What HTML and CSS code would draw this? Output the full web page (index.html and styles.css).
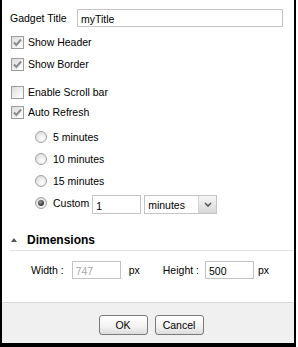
FILE: index.html
```html
<!DOCTYPE html>
<html lang="en">
<head>
  <meta charset="UTF-8">
  <title>Gadget Settings</title>
  <link rel="stylesheet" href="styles.css">
</head>
<body>
  <div class="dialog">
    <div class="content">
      <div class="title-row">
        <span class="title-label">Gadget Title</span>
        <input class="title-input" type="text" value="myTitle">
      </div>

      <div class="check-row first">
        <span class="box"><svg width="11" height="11" viewBox="0 0 11 11"><path d="M2 5.5 L4.3 8 L9 2.5" stroke="#8c8c8c" stroke-width="2" fill="none"/></svg></span>
        <span>Show Header</span>
      </div>
      <div class="check-row">
        <span class="box"><svg width="11" height="11" viewBox="0 0 11 11"><path d="M2 5.5 L4.3 8 L9 2.5" stroke="#8c8c8c" stroke-width="2" fill="none"/></svg></span>
        <span>Show Border</span>
      </div>
      <div class="check-row spaced">
        <span class="box"></span>
        <span>Enable Scroll bar</span>
      </div>
      <div class="check-row tight">
        <span class="box"><svg width="11" height="11" viewBox="0 0 11 11"><path d="M2 5.5 L4.3 8 L9 2.5" stroke="#8c8c8c" stroke-width="2" fill="none"/></svg></span>
        <span>Auto Refresh</span>
      </div>

      <div class="radios">
        <div class="radio-row"><span class="radio"></span><span>5 minutes</span></div>
        <div class="radio-row"><span class="radio"></span><span>10 minutes</span></div>
        <div class="radio-row"><span class="radio"></span><span>15 minutes</span></div>
        <div class="radio-row">
          <span class="radio on"></span><span>Custom</span>
          <input class="custom-input" type="text" value="1">
          <div class="select">
            <span class="select-text">minutes</span>
            <span class="select-arrow"><svg width="8" height="5" viewBox="0 0 8 5"><path d="M1 1 L4 4 L7 1" stroke="#555" stroke-width="1.6" fill="none"/></svg></span>
          </div>
        </div>
      </div>

      <div class="section-head">
        <span class="tri"></span>
        <span class="section-title">Dimensions</span>
      </div>
      <div class="dim-row">
        <span class="dim-label">Width :</span>
        <input class="dim-input disabled" type="text" value="747" disabled>
        <span class="unit">px</span>
        <span class="dim-label height">Height :</span>
        <input class="dim-input" type="text" value="500">
        <span class="unit near">px</span>
      </div>
    </div>

    <div class="footer">
      <button class="btn" type="button">OK</button>
      <button class="btn" type="button">Cancel</button>
    </div>
  </div>
</body>
</html>
```

FILE: styles.css
```css
body {
  margin: 0;
  background: #fff;
  font-family: "Liberation Sans", Arial, sans-serif;
  font-size: 10.5px;
  color: #000;
}

.dialog {
  width: 292px;
  height: 343px;
  border-left: 2px solid #000;
  border-right: 2px solid #000;
  border-bottom: 4px solid #000;
  display: flex;
  flex-direction: column;
}

.content {
  padding: 9px 0 0 8px;
}

.title-row {
  display: flex;
  align-items: center;
  height: 18px;
}

.title-label {
  width: 67px;
}

.title-input,
.custom-input,
.dim-input {
  box-sizing: border-box;
  border: 1px solid #c4c4c4;
  font-family: inherit;
  font-size: 10.5px;
  padding: 2px 3px 0;
  margin: 0;
  outline: none;
  color: #000;
  background: #fff;
}

.title-input {
  width: 206px;
  height: 18px;
}

.check-row {
  display: flex;
  align-items: center;
  height: 20px;
}

.check-row.first { margin-top: 5px; }
.check-row + .check-row { margin-top: 2px; }
.check-row.spaced { margin-top: 8px; }
.check-row.tight { margin-top: 0; }

.box {
  box-sizing: border-box;
  width: 13px;
  height: 13px;
  margin: 0 4px 0 1px;
  border: 1px solid #9c9c9c;
  background: linear-gradient(135deg, #dcdcdc, #f6f6f6 70%, #fff);
  display: flex;
  align-items: center;
  justify-content: center;
}

.radios {
  margin-top: 4px;
  padding-left: 25px;
}

.radio-row {
  display: flex;
  align-items: center;
  height: 22px;
}

.radio {
  box-sizing: border-box;
  width: 12px;
  height: 12px;
  margin-right: 6px;
  border-radius: 50%;
  border: 1px solid #a2a2a2;
  background: radial-gradient(circle at 60% 65%, #fff 0, #ececec 45%, #d2d2d2 100%);
  display: flex;
  align-items: center;
  justify-content: center;
}

.radio.on::after {
  content: "";
  width: 6px;
  height: 6px;
  border-radius: 50%;
  background: radial-gradient(circle at 40% 35%, #9a9a9a, #333 70%, #222);
}

.custom-input {
  width: 49px;
  height: 19px;
  margin-left: 3px;
  margin-top: 3px;
}

.select {
  box-sizing: border-box;
  width: 73px;
  height: 19px;
  margin-left: 3px;
  margin-top: 3px;
  border: 1px solid #c4c4c4;
  display: flex;
  align-items: center;
}

.select-text {
  flex: 1;
  padding-left: 3px;
  padding-top: 1px;
}

.select-arrow {
  width: 17px;
  height: 17px;
  border-left: 1px solid #d4d4d4;
  background: linear-gradient(#f6f6f6, #d8d8d8);
  display: flex;
  align-items: center;
  justify-content: center;
}

.section-head {
  display: flex;
  align-items: center;
  height: 20px;
  margin-top: 16px;
  border-bottom: 1px solid #e2e2e2;
}

.tri {
  width: 0;
  height: 0;
  margin: 0 10px 0 1px;
  border-left: 3px solid transparent;
  border-right: 3px solid transparent;
  border-bottom: 4px solid #555;
}

.section-title {
  font-size: 12px;
  font-weight: bold;
}

.dim-row {
  display: flex;
  align-items: center;
  height: 18px;
  margin-top: 10px;
  padding-left: 21px;
}

.dim-label {
  margin-right: 8px;
}

.dim-label.height {
  margin-left: 23px;
  margin-right: 6px;
}

.dim-input {
  width: 49px;
  height: 18px;
}

.dim-input.disabled {
  color: #a8a8a8;
}

.unit {
  margin-left: 8px;
}

.unit.near {
  margin-left: 4px;
}

.footer {
  margin-top: auto;
  height: 41px;
  border-top: 1px solid #d8d8d8;
  background: #f0f0f0;
  display: flex;
  justify-content: center;
  padding-top: 12px;
  box-sizing: border-box;
  gap: 7px;
  padding-left: 6px;
}

.btn {
  width: 49px;
  height: 20px;
  padding: 0;
  border: 1px solid #7a7a7a;
  border-radius: 3px;
  background: linear-gradient(#fff, #f2f2f2 60%, #dcdcdc);
  font-family: inherit;
  font-size: 10.5px;
  color: #000;
}
```
